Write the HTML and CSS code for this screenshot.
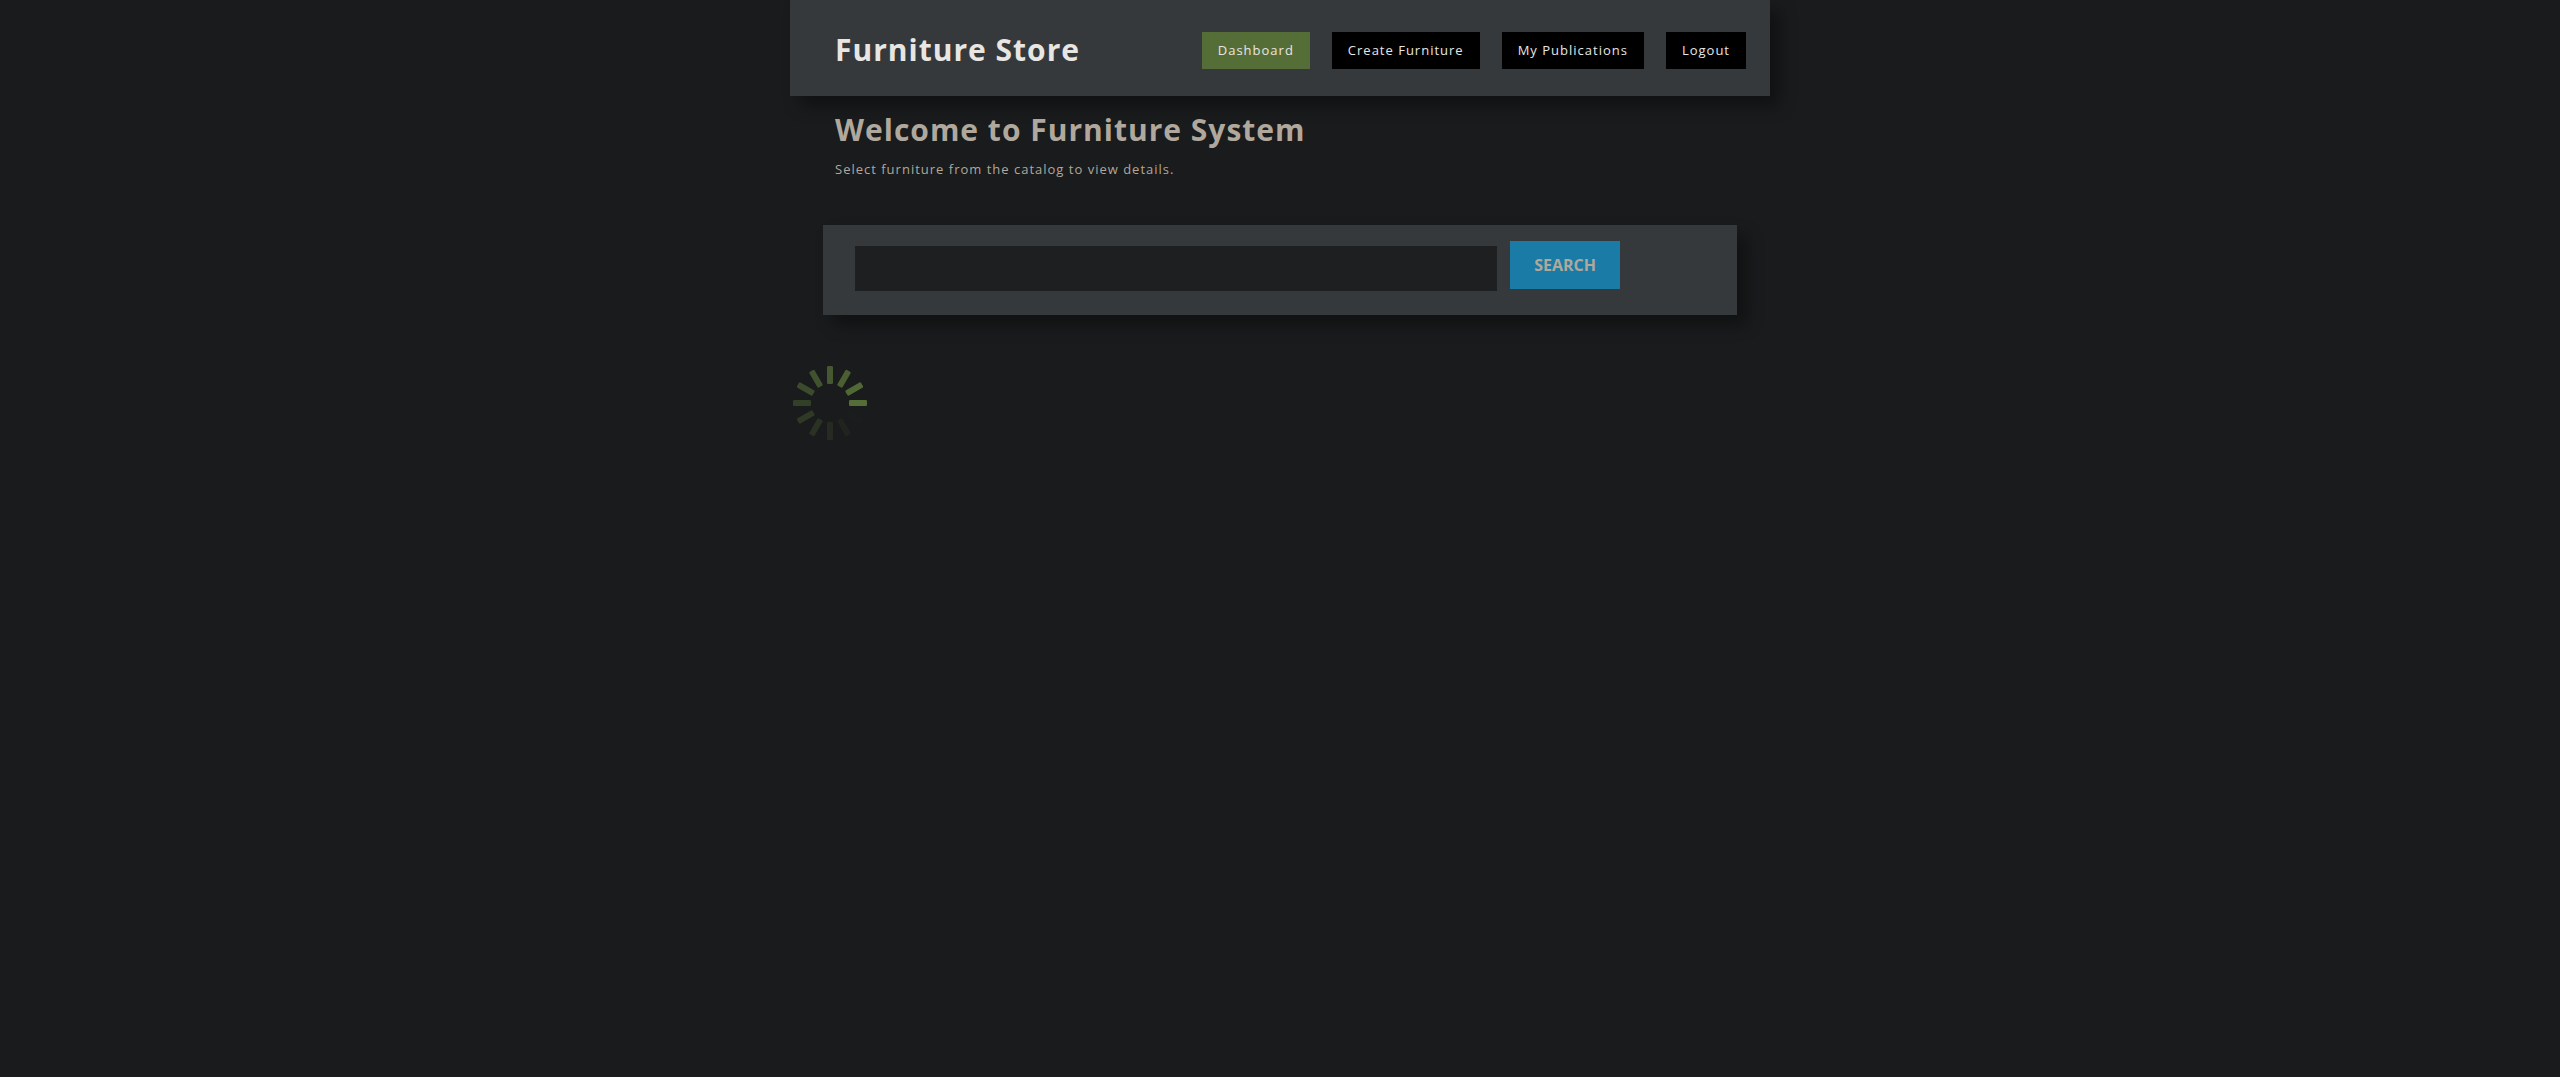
FILE: index.html
```html
<!DOCTYPE html>
<html lang="en">
<head>
<meta charset="utf-8">
<meta name="viewport" content="width=device-width, initial-scale=1">
<title>Furniture Store</title>
<link rel="stylesheet" href="styles.css">
</head>
<body>
<div class="container">
  <header class="site-header">
    <h1 class="title">Furniture Store</h1>
    <nav class="nav">
      <a class="nav-link active" href="#dashboard">Dashboard</a>
      <a class="nav-link" href="#create">Create Furniture</a>
      <a class="nav-link" href="#publications">My Publications</a>
      <a class="nav-link" href="#logout">Logout</a>
    </nav>
  </header>
  <main>
    <section class="intro">
      <h2 class="title">Welcome to Furniture System</h2>
      <p class="lead">Select furniture from the catalog to view details.</p>
    </section>
    <form class="search">
      <input class="search-input" type="text" name="search" aria-label="Search furniture">
      <button class="search-button" type="submit">SEARCH</button>
    </form>
    <svg class="spinner" viewBox="-40 -40 80 80" role="img" aria-label="Loading">
      <rect x="19" y="-3" width="18" height="6" rx="1.2"/>
      <rect x="19" y="-3" width="18" height="6" rx="1.2" transform="rotate(-30)" opacity=".92"/>
      <rect x="19" y="-3" width="18" height="6" rx="1.2" transform="rotate(-60)" opacity=".83"/>
      <rect x="19" y="-3" width="18" height="6" rx="1.2" transform="rotate(-90)" opacity=".75"/>
      <rect x="19" y="-3" width="18" height="6" rx="1.2" transform="rotate(-120)" opacity=".67"/>
      <rect x="19" y="-3" width="18" height="6" rx="1.2" transform="rotate(-150)" opacity=".58"/>
      <rect x="19" y="-3" width="18" height="6" rx="1.2" transform="rotate(180)" opacity=".45"/>
      <rect x="19" y="-3" width="18" height="6" rx="1.2" transform="rotate(150)" opacity=".36"/>
      <rect x="19" y="-3" width="18" height="6" rx="1.2" transform="rotate(120)" opacity=".28"/>
      <rect x="19" y="-3" width="18" height="6" rx="1.2" transform="rotate(90)" opacity=".2"/>
      <rect x="19" y="-3" width="18" height="6" rx="1.2" transform="rotate(60)" opacity=".11"/>
      <rect x="19" y="-3" width="18" height="6" rx="1.2" transform="rotate(30)" opacity=".04"/>
    </svg>
  </main>
</div>
</body>
</html>
```
FILE: styles.css
```css
* {
  box-sizing: border-box;
}

body {
  margin: 0;
  background: #191b1c;
  color: #b0a89c;
  font-family: "Segoe UI", "Open Sans", "Noto Sans", sans-serif;
  font-size: 13px;
  letter-spacing: 1px;
}

.container {
  max-width: 980px;
  margin: 0 auto;
}

.site-header {
  display: flex;
  flex-wrap: wrap;
  align-items: center;
  justify-content: space-between;
  gap: 16px;
  padding: 28px 24px 24px 45px;
  background: #35393b;
  color: #e8e6e3;
  box-shadow: 10px 10px 15px rgba(0, 0, 0, 0.35);
}

.title {
  margin: 0;
  font-size: 30px;
  line-height: 44px;
  font-weight: 700;
}

.nav {
  display: flex;
  flex-wrap: wrap;
  gap: 22px;
}

.nav-link {
  padding: 9px 16px;
  background: #000;
  color: #e8e6e3;
  line-height: 19px;
  text-decoration: none;
}

.nav-link.active {
  background: #556e38;
}

.intro {
  padding: 12px 45px 0;
}

.lead {
  margin: 8px 0 0;
  line-height: 19px;
}

.search {
  display: flex;
  align-items: flex-start;
  gap: 13px;
  margin: 46px 33px 48px;
  padding: 16px 117px 24px 32px;
  background: #35393b;
  box-shadow: 10px 10px 15px rgba(0, 0, 0, 0.35);
}

.search-input {
  flex: 1;
  min-width: 0;
  height: 45px;
  margin-top: 5px;
  padding: 0 12px;
  border: 0;
  background: #1e1f21;
  color: inherit;
  font: inherit;
}

.search-button {
  height: 48px;
  padding: 0 24px;
  border: 0;
  background: #1a7ba6;
  color: #b0a89c;
  font-family: "Segoe UI", "Open Sans", "Noto Sans", sans-serif;
  font-size: 16px;
  font-weight: 700;
}

.spinner {
  display: block;
  width: 80px;
  height: 80px;
  fill: #556e38;
}
```
